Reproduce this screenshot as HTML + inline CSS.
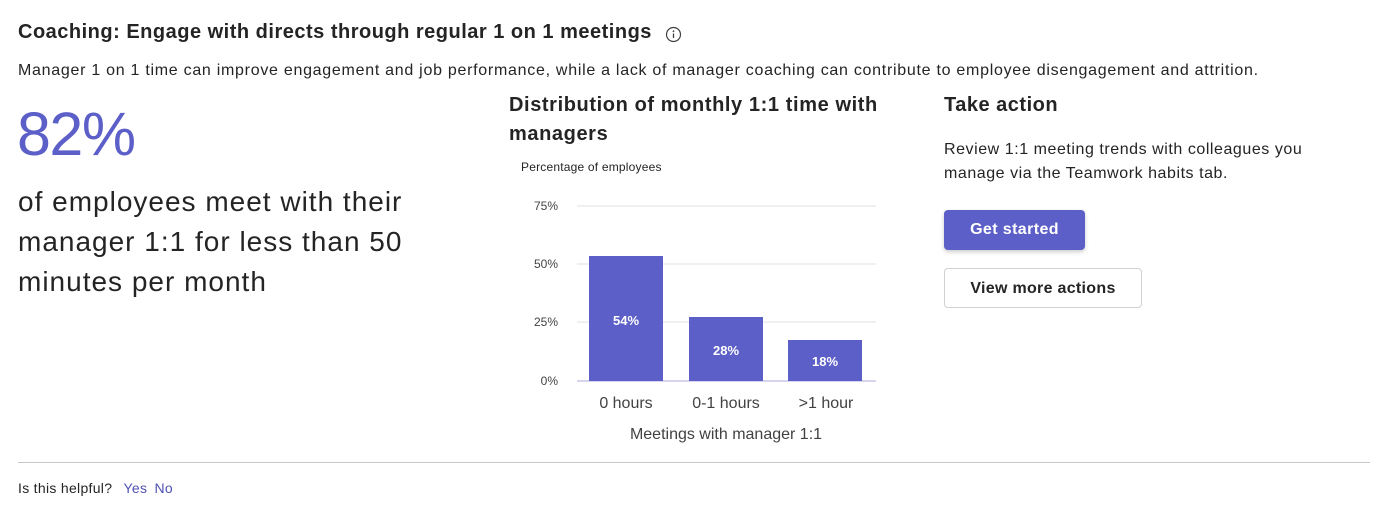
<!DOCTYPE html>
<html><head><meta charset="utf-8"><style>
*{margin:0;padding:0;box-sizing:border-box}
body{width:1383px;height:512px;background:#fff;font-family:"Liberation Sans",sans-serif;color:#242424;position:relative;overflow:hidden}
.a{position:absolute;white-space:nowrap}
</style></head><body>
<div class="a" style="left:18px;top:19px;font-size:20px;font-weight:bold;letter-spacing:0.5px;line-height:26px">Coaching: Engage with directs through regular 1 on 1 meetings</div>
<svg class="a" style="left:665px;top:26px" width="17" height="17" viewBox="0 0 17 17"><circle cx="8.5" cy="8.5" r="7" fill="none" stroke="#424242" stroke-width="1.2"/><circle cx="8.5" cy="5.3" r="0.9" fill="#424242"/><line x1="8.5" y1="7.5" x2="8.5" y2="12" stroke="#424242" stroke-width="1.3"/></svg>
<div class="a" style="left:18px;top:60px;font-size:16px;letter-spacing:0.72px;line-height:22px">Manager 1 on 1 time can improve engagement and job performance, while a lack of manager coaching can contribute to employee disengagement and attrition.</div>
<div class="a" style="left:17px;top:99px;font-size:61px;color:#5b5fc7;line-height:70px;letter-spacing:-1.5px">82%</div>
<div class="a" style="left:18px;top:182px;font-size:28px;line-height:40px;white-space:normal;width:460px;letter-spacing:1px">of employees meet with their manager 1:1 for less than 50 minutes per month</div>
<div class="a" style="left:509px;top:91px;font-size:20px;font-weight:bold;line-height:29px;white-space:normal;width:400px;letter-spacing:0.6px">Distribution of monthly 1:1 time with managers</div>
<div class="a" style="left:521px;top:160px;font-size:12px;letter-spacing:0.2px">Percentage of employees</div>
<svg class="a" style="left:500px;top:190px" width="420" height="260">
<g font-family="Liberation Sans" font-size="12" fill="#424242" text-anchor="end">
<text x="58" y="20">75%</text><text x="58" y="78">50%</text><text x="58" y="136">25%</text><text x="58" y="195">0%</text></g>
<g stroke="#edebe9" stroke-width="1.5"><line x1="77" y1="16" x2="376" y2="16"/><line x1="77" y1="74" x2="376" y2="74"/><line x1="77" y1="132" x2="376" y2="132"/></g>
<line x1="77" y1="191" x2="376" y2="191" stroke="#c8c6e8" stroke-width="1.5"/>
<g fill="#5b5fc7"><rect x="89" y="66" width="74" height="125"/><rect x="189" y="127" width="74" height="64"/><rect x="288" y="150" width="74" height="41"/></g>
<g font-family="Liberation Sans" font-size="13" font-weight="bold" fill="#fff" text-anchor="middle"><text x="126" y="135">54%</text><text x="226" y="165">28%</text><text x="325" y="176">18%</text></g>
<g font-family="Liberation Sans" font-size="16" fill="#424242" text-anchor="middle"><text x="126" y="218">0 hours</text><text x="226" y="218">0-1 hours</text><text x="326" y="218">&gt;1 hour</text><text x="226" y="249">Meetings with manager 1:1</text></g>
</svg>
<div class="a" style="left:944px;top:91px;font-size:20px;font-weight:bold;line-height:29px;letter-spacing:0.5px">Take action</div>
<div class="a" style="left:944px;top:138px;font-size:16px;line-height:24px;white-space:normal;width:375px;letter-spacing:0.55px">Review 1:1 meeting trends with colleagues you manage via the Teamwork habits tab.</div>
<div class="a" style="left:944px;top:210px;width:141px;height:40px;background:#5b5fc7;border-radius:4px;color:#fff;font-weight:bold;font-size:16px;line-height:40px;text-align:center;box-shadow:0 2px 4px rgba(0,0,0,.2);letter-spacing:0.4px">Get started</div>
<div class="a" style="left:944px;top:268px;width:198px;height:40px;border:1px solid #d1d1d1;border-radius:4px;font-weight:bold;font-size:16px;line-height:40px;text-align:center;letter-spacing:0.3px;color:#242424">View more actions</div>
<div class="a" style="left:18px;top:462px;width:1352px;height:1px;background:#c8c8c8"></div>
<div class="a" style="left:18px;top:479px;font-size:14px;line-height:18px;letter-spacing:0.3px">Is this helpful? <span style="color:#4f52b2;margin-left:7px">Yes</span> <span style="color:#4f52b2;margin-left:3px">No</span></div>
</body></html>
